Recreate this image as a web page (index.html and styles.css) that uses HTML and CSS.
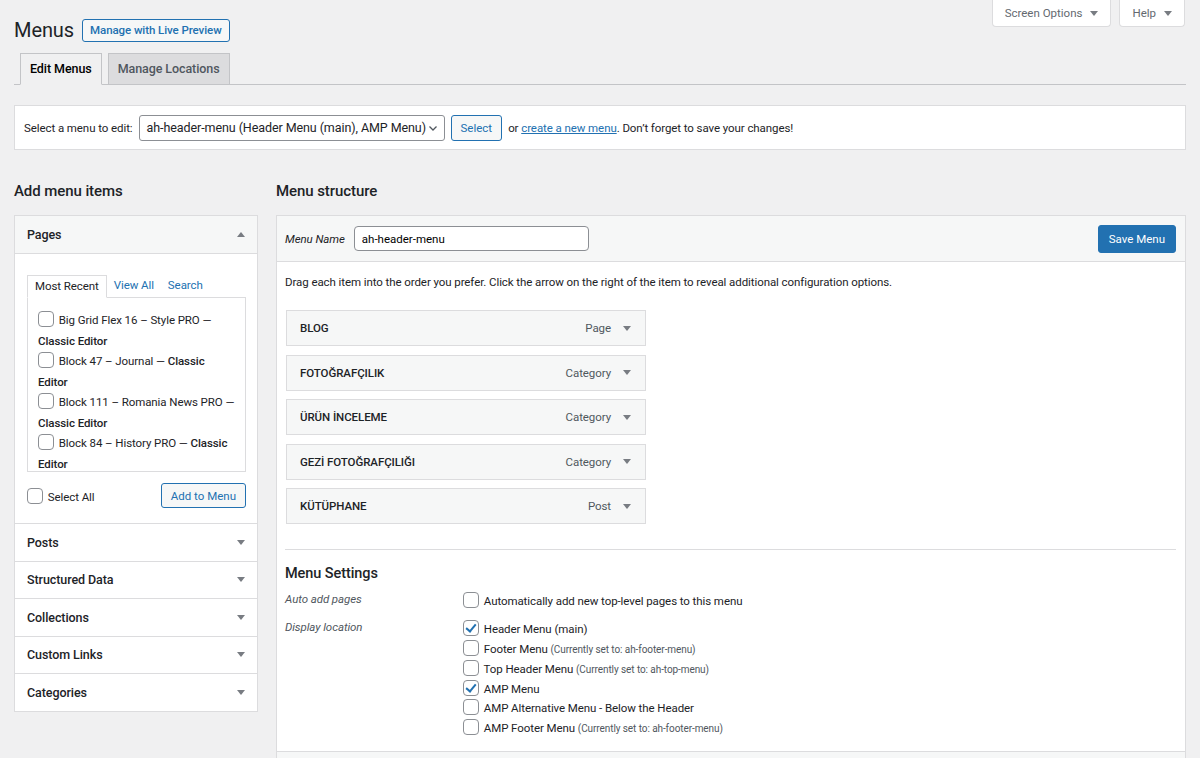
FILE: index.html
```html
<!doctype html>
<html lang="en">
<head>
    <meta charset="UTF-8">
    <title>Menus</title>
    <link rel="stylesheet" href="styles.css">
</head>
<body>
<div class="wrap">
    <div class="top">
        <div class="title-row">
            <h1>Menus</h1>
            <a class="page-action" href="#">Manage with Live Preview</a>
        </div>
        <div class="meta-links">
            <button class="meta-tab">Screen Options <i class="tri down"></i></button>
            <button class="meta-tab">Help <i class="tri down"></i></button>
        </div>
    </div>

    <div class="nav-tabs">
        <a class="nav-tab active" href="#">Edit Menus</a>
        <a class="nav-tab" href="#">Manage Locations</a>
    </div>

    <div class="manage-menus">
        <span>Select a menu to edit:</span>
        <div class="fake-select">
            <span>ah-header-menu (Header Menu (main), AMP Menu)</span>
            <svg width="12" height="12" viewBox="0 0 12 12"><path d="M2.5 4.5 L6 8 L9.5 4.5" fill="none" stroke="#50575e" stroke-width="1.3"/></svg>
        </div>
        <button class="btn">Select</button>
        <span class="hint">or <a href="#">create a new menu</a>. Don’t forget to save your changes!</span>
    </div>

    <div class="columns">
        <div class="col-left">
            <h2>Add menu items</h2>
            <div class="accordion">
                <div class="acc-section open">
                    <div class="acc-head">Pages <i class="tri up"></i></div>
                    <div class="acc-body">
                        <div class="tabs">
                            <span class="tab current">Most Recent</span>
                            <a class="tab" href="#">View All</a>
                            <a class="tab" href="#">Search</a>
                        </div>
                        <div class="tab-panel">
                            <label class="page-item"><input type="checkbox"> Big Grid Flex 16 – Style PRO — <b>Classic Editor</b></label>
                            <label class="page-item"><input type="checkbox"> Block 47 – Journal — <b>Classic Editor</b></label>
                            <label class="page-item"><input type="checkbox"> Block 111 – Romania News PRO — <b>Classic Editor</b></label>
                            <label class="page-item"><input type="checkbox"> Block 84 – History PRO — <b>Classic Editor</b></label>
                        </div>
                        <div class="acc-actions">
                            <label class="select-all"><input type="checkbox"> Select All</label>
                            <button class="btn">Add to Menu</button>
                        </div>
                    </div>
                </div>
                <div class="acc-section"><div class="acc-head">Posts <i class="tri down"></i></div></div>
                <div class="acc-section"><div class="acc-head">Structured Data <i class="tri down"></i></div></div>
                <div class="acc-section"><div class="acc-head">Collections <i class="tri down"></i></div></div>
                <div class="acc-section"><div class="acc-head">Custom Links <i class="tri down"></i></div></div>
                <div class="acc-section"><div class="acc-head">Categories <i class="tri down"></i></div></div>
            </div>
        </div>

        <div class="col-right">
            <h2>Menu structure</h2>
            <div class="menu-edit">
                <div class="menu-header">
                    <label class="menu-name"><i>Menu Name</i> <input type="text" value="ah-header-menu"></label>
                    <button class="btn primary">Save Menu</button>
                </div>
                <div class="menu-body">
                    <p class="drag-hint">Drag each item into the order you prefer. Click the arrow on the right of the item to reveal additional configuration options.</p>
                    <ul class="menu-items">
                        <li><b>BLOG</b><span class="type">Page <i class="tri down"></i></span></li>
                        <li><b>FOTOĞRAFÇILIK</b><span class="type">Category <i class="tri down"></i></span></li>
                        <li><b>ÜRÜN İNCELEME</b><span class="type">Category <i class="tri down"></i></span></li>
                        <li><b>GEZİ FOTOĞRAFÇILIĞI</b><span class="type">Category <i class="tri down"></i></span></li>
                        <li><b>KÜTÜPHANE</b><span class="type">Post <i class="tri down"></i></span></li>
                    </ul>
                    <div class="settings">
                        <h3>Menu Settings</h3>
                        <div class="set-row">
                            <div class="set-label">Auto add pages</div>
                            <div class="set-input">
                                <label><input type="checkbox"> Automatically add new top-level pages to this menu</label>
                            </div>
                        </div>
                        <div class="set-row">
                            <div class="set-label">Display location</div>
                            <div class="set-input">
                                <label><input type="checkbox" checked> Header Menu (main)</label>
                                <label><input type="checkbox"> Footer Menu <small>(Currently set to: ah-footer-menu)</small></label>
                                <label><input type="checkbox"> Top Header Menu <small>(Currently set to: ah-top-menu)</small></label>
                                <label><input type="checkbox" checked> AMP Menu</label>
                                <label><input type="checkbox"> AMP Alternative Menu - Below the Header</label>
                                <label><input type="checkbox"> AMP Footer Menu <small>(Currently set to: ah-footer-menu)</small></label>
                            </div>
                        </div>
                    </div>
                </div>
                <div class="menu-footer">
                    <a class="delete" href="#">Delete Menu</a>
                    <button class="btn primary">Save Menu</button>
                </div>
            </div>
        </div>
    </div>
</div>
</body>
</html>
```

FILE: styles.css
```css
body{ margin: 0; background: #f0f0f1; color: #1d2327; font-family: Roboto, "Noto Sans", sans-serif; font-size: 11.5px; letter-spacing: -0.08px; }
a{ color: #2271b1; }
.wrap{ padding: 0 14px; }

/* top */
.top{ display: flex; justify-content: space-between; align-items: flex-start; }
.title-row{ display: flex; align-items: center; gap: 8px; margin-top: 18px; }
h1{ margin: 0; font-size: 20px; font-weight: 400; line-height: 24px; }
.page-action{ border: 1px solid #2271b1; border-radius: 3px; background: #f6f7f7; padding: 4px 7px; font-size: 11.5px; font-weight: 500; text-decoration: none; line-height: 13px; }
.meta-links{ display: flex; gap: 8px; margin-right: 1px; }
.meta-tab{ display: flex; align-items: center; gap: 8px; height: 27px; padding: 0 12px; background: #fff; border: 1px solid #dcdcde; border-top: none; border-radius: 0 0 4px 4px; color: #646970; font: inherit; }

.tri{ display: inline-block; width: 0; height: 0; border-left: 4px solid transparent; border-right: 4px solid transparent; }
.tri.down{ border-top: 5px solid #787c82; }
.tri.up{ border-bottom: 5px solid #787c82; }

/* nav tabs */
.nav-tabs{ display: flex; gap: 6px; margin-top: 11px; padding-left: 6px; border-bottom: 1px solid #c3c4c7; }
.nav-tab{ margin-bottom: -1px; padding: 0 9px; height: 30px; line-height: 30px; border: 1px solid #c3c4c7; background: #dcdcde; color: #50575e; font-size: 12.5px; font-weight: 500; text-decoration: none; }
.nav-tab.active{ background: #f0f0f1; border-bottom-color: #f0f0f1; color: #000; }

/* select bar */
.manage-menus{ display: flex; align-items: center; gap: 6px; margin-top: 20px; height: 43px; padding: 0 9px; background: #fff; border: 1px solid #dcdcde; }
.fake-select{ display: flex; align-items: center; justify-content: space-between; box-sizing: border-box; width: 306px; height: 26px; padding: 0 5px 0 7px; border: 1px solid #8c8f94; border-radius: 3px; font-size: 12.5px; white-space: nowrap; }
.btn{ height: 26px; padding: 0 9px; border: 1px solid #2271b1; border-radius: 3px; background: #f6f7f7; color: #2271b1; font: inherit; }
.btn.primary{ background: #2271b1; color: #fff; height: 28px; padding: 0 10px; }
.hint a{ text-decoration: underline; }

/* columns */
.columns{ display: flex; gap: 18px; margin-top: 31px; }
.col-left{ width: 244px; flex: none; }
.col-right{ flex: 1; }
h2{ margin: 0 0 14px; font-size: 15px; font-weight: 500; line-height: 20px; }

.accordion{ background: #fff; border: 1px solid #dcdcde; }
.acc-section + .acc-section{ border-top: 1px solid #dcdcde; }
.acc-head{ display: flex; justify-content: space-between; align-items: center; height: 36.5px; padding: 0 12px 0 12px; font-size: 12.5px; font-weight: 500; }
.acc-section.open .acc-head{ height: 37px; border-bottom: 1px solid #dcdcde; background: #f6f7f7; }
.acc-body{ padding: 21px 11px 15px 12px; }
.tabs{ display: flex; }
.tab{ padding: 0 7px; height: 21px; line-height: 21px; text-decoration: none; }
.tab.current{ border: 1px solid #dcdcde; border-bottom-color: #fff; margin-bottom: -1px; position: relative; background: #fff; }
.tab-panel{ box-sizing: border-box; height: 175px; overflow: hidden; border: 1px solid #dcdcde; padding: 12px 10px 0 10px; line-height: 20.5px; }
.page-item{ display: block; }
.page-item b{ font-weight: 500; }
.acc-actions{ display: flex; justify-content: space-between; align-items: center; margin-top: 11px; }
.acc-actions .btn{ height: 25px; }

input[type=checkbox]{ appearance: none; -webkit-appearance: none; width: 16px; height: 16px; margin: 0 2px 0 0; border: 1px solid #8c8f94; border-radius: 4px; background: #fff; vertical-align: -3px; position: relative; }
input[type=checkbox]:checked::before{ content: ""; position: absolute; left: 4px; top: 1px; width: 4px; height: 8px; border-right: 2px solid #2271b1; border-bottom: 2px solid #2271b1; transform: rotate(40deg); }

/* menu edit */
.menu-edit{ background: #fff; border: 1px solid #dcdcde; }
.menu-header{ display: flex; justify-content: space-between; align-items: center; height: 45px; padding: 0 9px 0 8px; background: #f6f7f7; border-bottom: 1px solid #dcdcde; }
.menu-name{ display: flex; align-items: center; gap: 9px; }
.menu-name input{ box-sizing: border-box; width: 235px; height: 25px; padding: 0 7px; border: 1px solid #8c8f94; border-radius: 4px; font: inherit; }
.menu-body{ padding: 0 9px 0 8px; }
.drag-hint{ margin: 13px 0 21px; }
.menu-items{ list-style: none; margin: 0; padding: 0; }
.menu-items li{ display: flex; justify-content: space-between; align-items: center; box-sizing: border-box; width: 360px; height: 36px; margin: 0 0 8.6px 1px; padding: 0 14px 0 13px; background: #f6f7f7; border: 1px solid #dcdcde; }
.menu-items b{ font-weight: 500; }
.type{ display: flex; align-items: center; gap: 12px; color: #50575e; }
.settings{ margin-top: 25px; border-top: 1px solid #dcdcde; padding: 15px 0 12px; }
h3{ margin: 0 0 10px; font-size: 14.5px; font-weight: 500; }
.set-row{ display: flex; margin-bottom: 8px; }
.set-row:last-child{ margin-bottom: 0; }
.set-label{ width: 178px; flex: none; font-style: italic; color: #50575e; }
.set-input label{ display: block; line-height: 19.8px; }
small{ font-size: 10px; color: #50575e; }
.menu-footer{ display: flex; justify-content: space-between; align-items: center; height: 45px; padding: 0 9px; background: #f6f7f7; border-top: 1px solid #dcdcde; }
.delete{ color: #b32d2e; }
```
